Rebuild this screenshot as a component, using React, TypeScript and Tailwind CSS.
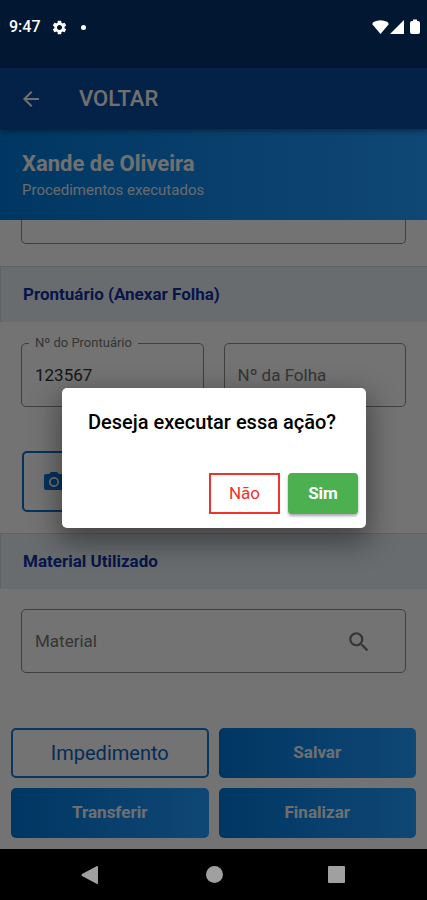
import { useState } from 'react'
import { MdArrowBack, MdPhotoCamera, MdSearch, MdSettings } from 'react-icons/md'

function StatusBar(){
  return (
    <div className="relative z-20 flex h-[68px] items-start justify-between pl-[9px] pr-[6px] pt-[17px] text-white">
      <div className="flex h-5 items-center">
        <span className="text-[16px] leading-5 font-medium">9:47</span>
        <MdSettings className="ml-[10px] size-[17px]" />
        <span className="ml-[13px] size-[5px] rounded-full bg-white"></span>
      </div>
      <div className="flex h-5 items-center">
        <svg className="h-4 w-[17px]" viewBox="0 0 17 16" fill="currentColor"><path d="M8.500 15L0.500 5.500Q0 4 2 2.800Q8.500-0.500 15 2.800Q17 4 16.500 5.500Z" /></svg>
        <svg className="h-4 w-4" viewBox="0 0 16 16" fill="currentColor"><path d="M15 1V15H1Z" /></svg>
        <svg className="ml-1 h-4 w-3" viewBox="0 0 12 16" fill="currentColor"><path d="M4 0.500H8V2H9Q11 2 11 4V13Q11 15 9 15H3Q1 15 1 13V4Q1 2 3 2H4Z" /></svg>
      </div>
    </div>
  )
}

function SectionTitle({ children }: { children: string }){
  return (
    <h2 className="h-14 border-t border-l border-[#d0d4da] bg-[#e4ebf2] px-[22px] text-[17px] leading-[54px] font-bold text-[#10309f]">{children}</h2>
  )
}

const field = 'h-16 w-full rounded-[5px] border border-[#8a8a8a] bg-transparent px-[13px] text-[17px] text-[#303030] outline-none placeholder:text-[#757575] placeholder:opacity-100'
const filled = 'h-[50px] rounded-[5px] bg-linear-to-r from-[#0077d6] to-[#219bff] text-[17px] font-bold text-[#f2f2f2]'

function Dialog({ onClose }: { onClose: () => void }){
  return (
    <div className="absolute inset-0 z-10 flex items-center justify-center bg-black/54 pl-[62px] pr-[61px] pt-[68px] pb-[52px]">
      <div role="dialog" aria-modal="true" aria-labelledby="dialog-title" className="w-full max-w-md rounded-[5px] bg-white pb-[14px] pt-5 shadow-[0_11px_28px_4px_rgba(0,0,0,0.4)]">
        <h3 id="dialog-title" className="whitespace-nowrap px-[26px] text-[20px] leading-7 font-medium text-black">Deseja executar essa ação?</h3>
        <div className="mt-[37px] flex justify-end gap-2 pr-2">
          <button onClick={onClose} className="h-[41px] w-[71px] border-2 border-[#f03228] text-[17px] text-[#f03228]">Não</button>
          <button onClick={onClose} className="h-[41px] w-[70px] rounded-[4px] bg-[#4caf50] text-[17px] font-bold text-white shadow-[0_2px_3px_rgba(0,0,0,0.35)]">Sim</button>
        </div>
      </div>
    </div>
  )
}

export default function App(){
  const [open,setOpen]=useState(true)
  const [prontuario,setProntuario]=useState('123567')
  return (
    <div className="relative flex min-h-screen flex-col bg-[#fafafa] font-[Roboto,'Liberation_Sans',sans-serif]">
      <div className="bg-[#05346e]"><StatusBar /></div>
      <header className="relative z-[1] flex h-[61px] items-center bg-[#0a4a9c] px-[19px] text-[#f5f5f5] shadow-[0_2px_5px_rgba(0,0,0,0.4)]">
        <button aria-label="Voltar"><MdArrowBack className="size-6" /></button>
        <h1 className="ml-9 text-[22px] leading-7 font-medium">VOLTAR</h1>
      </header>
      <div className="h-[91px] bg-linear-to-r from-[#0077d6] to-[#219bff] px-[22px] pt-[21px] text-[#f5f5f5]">
        <div className="text-[22px] leading-7 font-bold">Xande de Oliveira</div>
        <div className="text-[15px] leading-6 text-[#e0e6ec]">Procedimentos executados</div>
      </div>

      <main className="flex flex-1 flex-col">
        <div className="mx-[21px] mb-[22px] h-6 rounded-b-[5px] border border-t-0 border-[#8a8a8a]"></div>
        <SectionTitle>Prontuário (Anexar Folha)</SectionTitle>
        <div className="grid grid-cols-2 gap-5 px-[21px] pt-[21px]">
          <div className="relative">
            <label htmlFor="prontuario" className="absolute left-2 -top-2 bg-[#fafafa] px-[6px] text-[13px] leading-4 text-[#757575]">Nº do Prontuário</label>
            <input id="prontuario" className={field} value={prontuario} onChange={e=>setProntuario(e.target.value)} />
          </div>
          <input aria-label="Nº da Folha" placeholder="Nº da Folha" className={field} />
        </div>
        <div className="px-[22px] pt-[44px] pb-[21px]">
          <button aria-label="Anexar foto" className="flex h-[61px] w-[72px] items-center rounded-[5px] border-2 border-[#0b6fd0] pl-[18px] text-[#0b6fd0]">
            <MdPhotoCamera className="size-6" />
          </button>
        </div>
        <SectionTitle>Material Utilizado</SectionTitle>
        <div className="relative mx-[21px] mt-5">
          <input aria-label="Material" placeholder="Material" className={field} />
          <button aria-label="Buscar" className="absolute right-[34px] top-5 text-[#757575]"><MdSearch className="size-[26px]" /></button>
        </div>
        <div className="mt-auto grid grid-cols-2 gap-[10px] px-[11px] pb-[11px]">
          <button className="h-[50px] rounded-[5px] border-2 border-[#1478d4] text-[20px] text-[#0d62bd]">Impedimento</button>
          <button className={filled}>Salvar</button>
          <button className={filled}>Transferir</button>
          <button className={filled}>Finalizar</button>
        </div>
      </main>

      {open && <Dialog onClose={()=>setOpen(false)} />}

      <nav className="relative z-20 flex h-[51px] items-center justify-between bg-black px-[80px] text-[#a0a0a0]">
        <button aria-label="Retroceder"><svg className="size-5" viewBox="0 0 20 20" fill="currentColor"><path d="M17 1Q18 0.500 18 2V18Q18 19.500 17 19L2 11Q1 10 2 9Z" /></svg></button>
        <button aria-label="Início" className="size-[17px] rounded-full bg-[#a0a0a0]"></button>
        <button aria-label="Recentes" className="mr-[2px] size-[17px] rounded-[1px] bg-[#a0a0a0]"></button>
      </nav>
    </div>
  )
}
